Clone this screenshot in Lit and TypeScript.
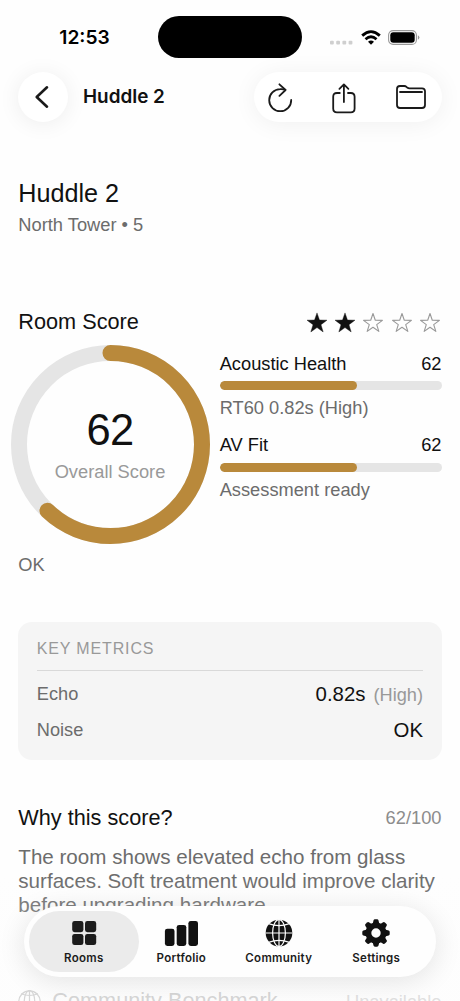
import { LitElement, html, css, svg } from "lit";
import { customElement, property } from "lit/decorators.js";

const starPoints = (r: number, inner: number) =>
  Array.from({ length: 10 }, (_, i) => {
    const radius = i % 2 ? inner : r;
    const a = (i * Math.PI) / 5;
    return `${(11 + radius * Math.sin(a)).toFixed(2)},${(11.4 - radius * Math.cos(a)).toFixed(2)}`;
  }).join(" ");

const meridians = svg`
  <path d="M14 0.7V27.3M0.7 14H27.3"></path>
  <ellipse cx="14" cy="14" rx="6.4" ry="13.4"></ellipse>
  <path d="M3.6 4.6Q14 8.8 24.4 4.6M3.6 23.4Q14 19.2 24.4 23.4"></path>`;

@customElement("score-ring")
class ScoreRing extends LitElement {
  @property({ type: Number }) value = 0;
  static styles = css`
    :host { display: grid; width: 199px; height: 199px; }
    svg, .label { grid-area: 1 / 1; }
    .label { display: flex; flex-direction: column; align-items: center; padding-top: 60px; }
    .num { font-size: 43.5px; line-height: 50px; color: #111; letter-spacing: -0.6px; }
    .cap { font-size: 18.3px; line-height: 22px; margin-top: 6px; color: #999; }
  `;
  render() {
    const c = 2 * Math.PI * 91.5;
    return html`
      <svg width="199" height="199" viewBox="0 0 199 199" fill="none" stroke-width="16">
        <circle cx="99.5" cy="99.5" r="91.5" stroke="#e5e5e5"></circle>
        <circle cx="99.5" cy="99.5" r="91.5" stroke="#b9893b" stroke-linecap="round"
          stroke-dasharray="${(c * this.value) / 100} ${c}" transform="rotate(-90 99.5 99.5)"></circle>
      </svg>
      <div class="label"><div class="num">${this.value}</div><div class="cap">Overall Score</div></div>`;
  }
}

@customElement("score-bar")
class ScoreBar extends LitElement {
  @property() name = "";
  @property() note = "";
  @property({ type: Number }) value = 0;
  static styles = css`
    :host { display: block; height: 81.7px; font-size: 18.25px; line-height: 22px; color: #111; }
    .top { display: flex; justify-content: space-between; }
    .track { height: 9px; border-radius: 5px; background: #e5e5e5; margin: 6.6px 0 7px; overflow: hidden; }
    .fill { height: 100%; border-radius: 5px; background: #b9893b; }
    .note { color: #6c6c6c; white-space: nowrap; }
  `;
  render() {
    return html`
      <div class="top"><span>${this.name}</span><span>${this.value}</span></div>
      <div class="track"><div class="fill" style="width:${this.value}%"></div></div>
      <div class="note">${this.note}</div>`;
  }
}

@customElement("app-root")
class AppRoot extends LitElement {
  static styles = css`
    :host { display: block; font-family: "Liberation Sans", Arial, sans-serif; color: #111; }
    * { box-sizing: border-box; }
    svg { display: block; flex: none; }
    .screen { position: relative; width: 460px; height: 1001px; overflow: hidden; background: #fefefe; }
    .status { display: grid; grid-template-columns: 158px 144px 1fr; height: 72px; padding-top: 16px; align-items: start;
      font-family: Inter, sans-serif; }
    .time { font-size: 19.2px; font-weight: 600; line-height: 42px; padding-left: 11px; text-align: center; color: #000; }
    .island { height: 42px; border-radius: 21px; background: #000; }
    .signals { display: flex; align-items: flex-end; height: 28.5px; padding-left: 28px; }
    .wifi { margin-left: 7.5px; }
    .battery { margin-left: 7.5px; }
    .nav { display: flex; align-items: center; height: 49px; padding: 0 18px; }
    .back { width: 50px; height: 50px; border-radius: 25px; background: #fff; display: grid; place-items: center;
      box-shadow: 0 2px 22px rgba(0, 0, 0, 0.07); }
    .navtitle { font: 600 18.9px/24px Inter, sans-serif; margin-left: 15px; padding-top: 1px; flex: 1; color: #111; }
    .actions { display: flex; align-items: center; justify-content: space-between; width: 188px; height: 50px;
      padding: 2px 16px 0 14px; border-radius: 25px; background: #fff; box-shadow: 0 2px 24px rgba(0, 0, 0, 0.06); }
    .content { padding: 0 18.5px 0 18.3px; }
    .title { font-size: 25.2px; line-height: 30px; margin-top: 57px; }
    .sub { font-size: 18.3px; line-height: 22px; margin-top: 6px; color: #6c6c6c; }
    .head { display: flex; justify-content: space-between; align-items: center; height: 26px; font-size: 21.7px; line-height: 26px; }
    .scorehead { margin-top: 73px; }
    .stars { display: flex; gap: 6.3px; padding-top: 1.5px; margin-right: 0.5px; }
    .scores { display: flex; margin: 10px 0 0 -7.8px; gap: 10.2px; }
    .bars { flex: 1; padding-top: 7.5px; }
    .verdict { font-size: 18.3px; line-height: 22px; margin-top: 10px; color: #6c6c6c; }
    .card { margin-top: 45.8px; height: 138px; border-radius: 14px; background: #f5f5f5; padding: 17.6px 18.5px 0; }
    .cardhead { font-size: 16px; line-height: 20px; letter-spacing: 0.85px; color: #999; height: 31.7px;
      border-bottom: 1px solid #d9d9d9; }
    .row { display: flex; justify-content: space-between; align-items: center; height: 36px; font-size: 18.2px; color: #6c6c6c; }
    .row:nth-child(2) { margin-top: 5px; }
    .row b { font-weight: 400; font-size: 20.4px; color: #111; }
    .row i { font-style: normal; color: #999; margin-left: 8px; }
    .why { margin-top: 45.4px; }
    .small { font-size: 18.3px; color: #8c8c8c; }
    .para { font-size: 20.6px; line-height: 24px; margin-top: 13.8px; color: #6c6c6c; white-space: nowrap; }
    .bench { display: flex; align-items: center; margin-top: 72.5px; height: 24px; font-size: 21.7px; color: #c6c6c6; }
    .bench svg { margin-right: 11px; }
    .bench span { flex: 1; }
    .bench em { font-style: normal; font-size: 18.3px; color: #d4d4d4; padding-top: 2px; }
    .dock { position: absolute; left: 0; right: 0; bottom: 0; height: 125px; padding: 30px 24px 0;
      background: linear-gradient(to bottom, rgba(252,252,252,0), rgba(252,252,252,.3) 50%, rgba(252,252,252,.3)); }
    .tabs { display: flex; height: 71px; padding: 5px 11px; border-radius: 36px; background: #fefefe;
      box-shadow: 0 4px 28px rgba(0, 0, 0, 0.11); }
    .tab { flex: 1; display: flex; flex-direction: column; align-items: center; padding-top: 8px;
      font: 600 11.5px/14px Inter, sans-serif; letter-spacing: 0.28px; color: #1c1c1c; }
    .tab svg { margin-bottom: 4px; }
    .on { margin: 0 -6.3px; flex: 0 0 110.2px; border-radius: 31px; background: #ebebeb; }
  `;

  private star(on: boolean) {
    return html`<svg width="22" height="22" viewBox="0 0 22 22">
      <polygon points=${on ? starPoints(10.5, 4.2) : starPoints(9.9, 3.9)} fill=${on ? "#111" : "none"}
        stroke=${on ? "#111" : "#999"} stroke-width=${on ? 0.4 : 1.1} stroke-linejoin="round"></polygon></svg>`;
  }

  render() {
    const teeth = [0, 45, 90, 135, 180, 225, 270, 315];
    return html`<div class="screen">
      <div class="status">
        <div class="time">12:53</div>
        <div class="island"></div>
        <div class="signals">
          <svg width="23" height="5" viewBox="0 0 23 5" fill="#cfcfcf">
            ${[0, 6.2, 12.4, 18.6].map((x) => svg`<rect x=${x} y="0.8" width="3.8" height="3.8" rx="1"></rect>`)}
          </svg>
          <svg class="wifi" width="20" height="15" viewBox="0 0 20 15" fill="none" stroke="#000" stroke-width="2.8">
            <path d="M1.2 5.6Q10 -2.4 18.8 5.6"></path>
            <path d="M4.5 9.2Q10 4.3 15.5 9.2"></path>
            <path d="M10 14.8L7 11.8Q10 9.3 13 11.8Z" fill="#000" stroke="none"></path>
          </svg>
          <svg class="battery" width="32" height="15" viewBox="0 0 32 15">
            <rect x="0.6" y="0.6" width="27.8" height="13.8" rx="4.5" fill="none" stroke="#999" stroke-width="1.1"></rect>
            <rect x="2.3" y="2.3" width="24.4" height="10.4" rx="3" fill="#000"></rect>
            <path d="M29.9 5.3Q31.4 6 31.4 7.5T29.9 9.7Z" fill="#999"></path>
          </svg>
        </div>
      </div>

      <div class="nav">
        <div class="back">
          <svg width="24" height="24" viewBox="0 0 24 24" fill="none" stroke="#1a1a1a" stroke-width="2.6" stroke-linecap="round" stroke-linejoin="round">
            <path d="M16 2.3L5.7 12L16 21.7"></path></svg>
        </div>
        <div class="navtitle">Huddle 2</div>
        <div class="actions">
          <svg width="26" height="32" viewBox="0 0 26 32" fill="none" stroke="#1a1a1a" stroke-width="1.8" stroke-linecap="round" stroke-linejoin="round">
            <path d="M23.2 17.9A11 11 0 1 1 12.2 7.2Q14.8 7 17.3 7.8"></path><path d="M11.4 2.3L17.6 8L11.4 13.9"></path></svg>
          <svg width="26" height="32" viewBox="0 0 26 32" fill="none" stroke="#1a1a1a" stroke-width="1.8" stroke-linecap="round" stroke-linejoin="round">
            <path d="M7.8 11H5Q1.2 11 1.2 14.8V26.5Q1.2 30.3 5 30.3H18.8Q22.6 30.3 22.6 26.5V14.8Q22.6 11 18.8 11H16"></path>
            <path d="M11.9 20V2.6M7.4 6.8L11.9 2.4L16.4 6.8"></path></svg>
          <svg width="30" height="32" viewBox="0 0 30 32" fill="none" stroke="#1a1a1a" stroke-width="1.8" stroke-linecap="round" stroke-linejoin="round">
            <path d="M1 7Q1 4 4 4H8.2Q9.5 4 10.5 4.9L11.2 5.5Q12.2 6.3 13.6 6.3H26Q29 6.3 29 9.3V23Q29 26 26 26H4Q1 26 1 23Z"></path>
            <path d="M4 10H26"></path></svg>
        </div>
      </div>

      <div class="content">
        <div class="title">Huddle 2</div>
        <div class="sub">North Tower • 5</div>
        <div class="head scorehead"><span>Room Score</span>
          <div class="stars">${[true, true, false, false, false].map((s) => this.star(s))}</div></div>
        <div class="scores">
          <score-ring value="62"></score-ring>
          <div class="bars">
            <score-bar name="Acoustic Health" value="62" note="RT60 0.82s (High)"></score-bar>
            <score-bar name="AV Fit" value="62" note="Assessment ready"></score-bar>
          </div>
        </div>
        <div class="verdict">OK</div>
        <div class="card">
          <div class="cardhead">KEY METRICS</div>
          <div class="row"><span>Echo</span><span><b>0.82s</b><i>(High)</i></span></div>
          <div class="row"><span>Noise</span><b>OK</b></div>
        </div>
        <div class="head why"><span>Why this score?</span><span class="small">62/100</span></div>
        <div class="para">The room shows elevated echo from glass<br />surfaces. Soft treatment would improve clarity<br />before upgrading hardware.</div>
        <div class="bench">
          <svg width="23" height="23" viewBox="0 0 28 28" fill="none" stroke="#c6c6c6" stroke-width="1.5">
            <circle cx="14" cy="14" r="13"></circle>${meridians}</svg>
          <span>Community Benchmark</span><em>Unavailable</em>
        </div>
      </div>

      <div class="dock"><div class="tabs">
        <div class="tab on">
          <svg width="28" height="28" viewBox="0 0 28 28" fill="#1c1c1c">
            <rect x="2.2" y="2" width="11.2" height="11.2" rx="2.4"></rect><rect x="15" y="2" width="11.2" height="11.2" rx="2.4"></rect>
            <rect x="2.2" y="14.9" width="11.2" height="11.2" rx="2.4"></rect><rect x="15" y="14.9" width="11.2" height="11.2" rx="2.4"></rect></svg>
          Rooms</div>
        <div class="tab">
          <svg width="34" height="28" viewBox="0 0 34 28" fill="#111">
            <rect x="0.9" y="9.7" width="9.6" height="17.2" rx="2.4"></rect><rect x="12.7" y="5.9" width="9.6" height="21" rx="2.4"></rect>
            <rect x="24.4" y="1.9" width="9.6" height="25" rx="2.4"></rect></svg>
          Portfolio</div>
        <div class="tab"><svg width="28" height="28" viewBox="0 0 28 28">
            <circle cx="14" cy="14" r="13.3" fill="#111"></circle>
            <g fill="none" stroke="#fefefe" stroke-width="1.2">${meridians}</g></svg>
          Community</div>
        <div class="tab">
          <svg width="28" height="28" viewBox="0 0 28 28">
            <g fill="#111">${teeth.map((a) => svg`<path d="M10.6 5L11.5 1.4Q11.8 0.3 12.9 0.3H15.1Q16.2 0.3 16.5 1.4L17.4 5Z" transform="rotate(${a} 14 14)"></path>`)}</g>
            <circle cx="14" cy="14" r="7.6" fill="none" stroke="#111" stroke-width="5.8"></circle></svg>
          Settings</div>
      </div></div>
    </div>`;
  }
}
